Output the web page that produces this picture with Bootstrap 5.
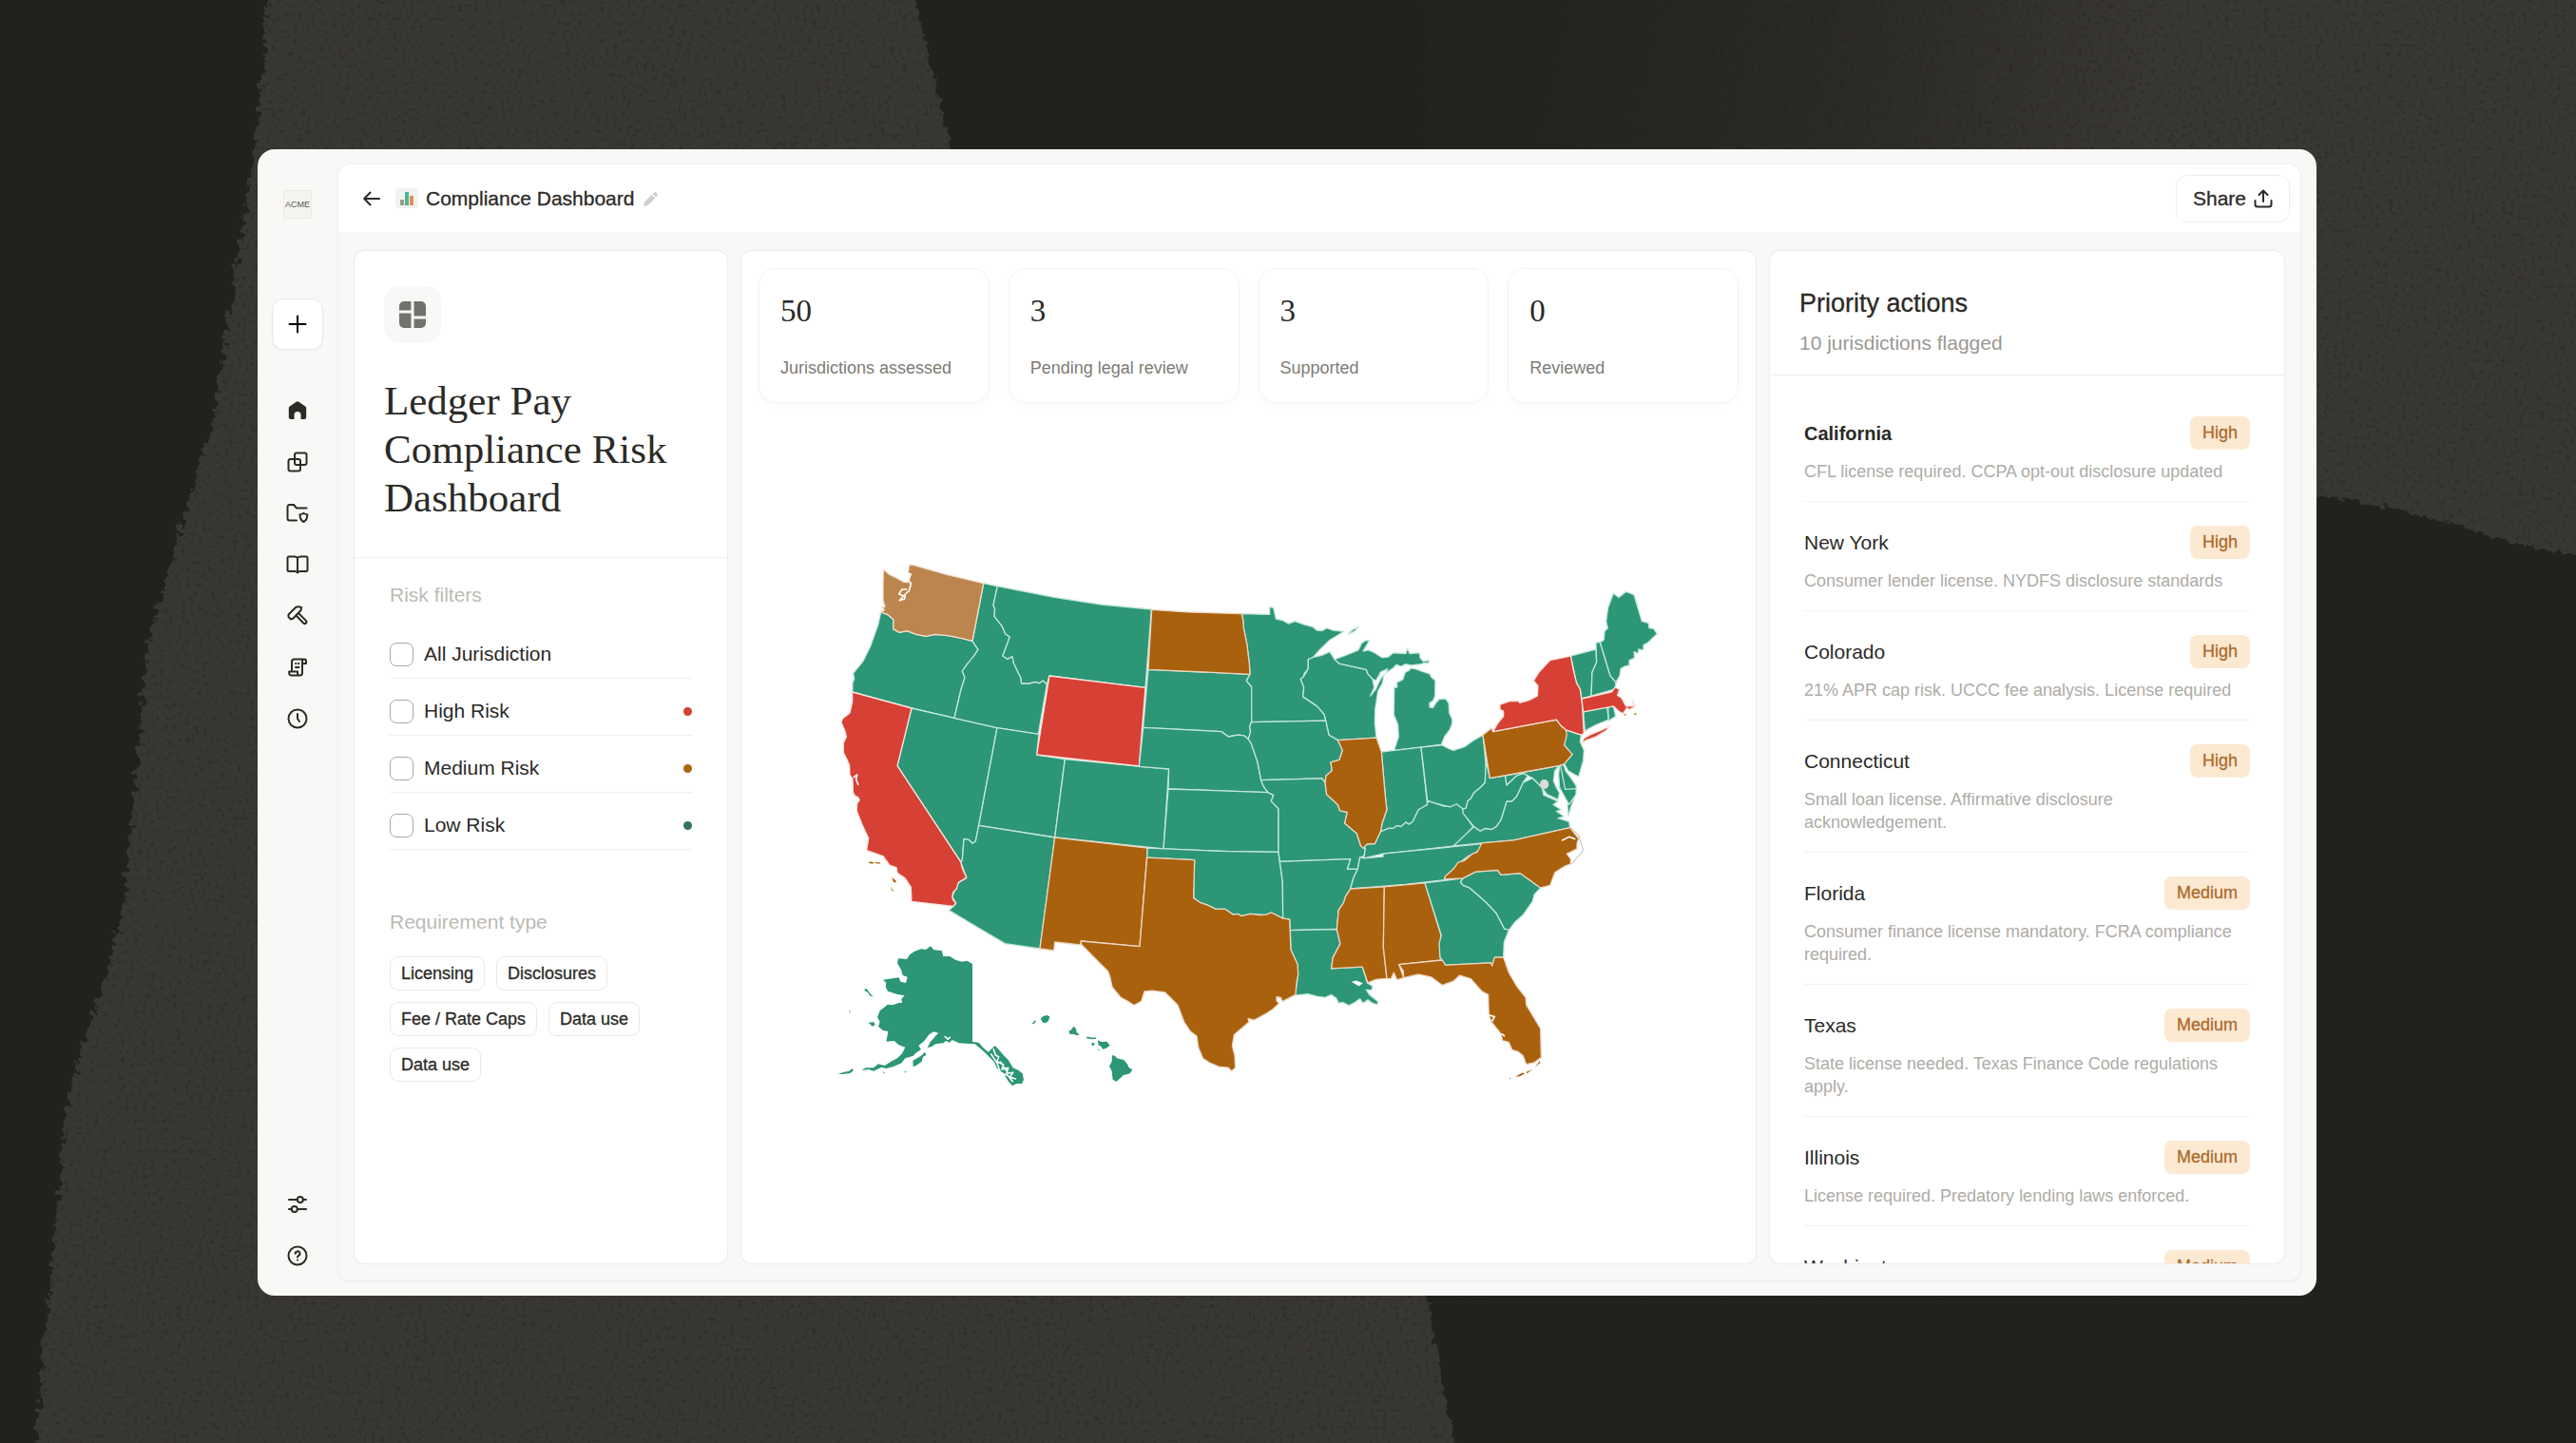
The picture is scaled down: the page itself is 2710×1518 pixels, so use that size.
<!DOCTYPE html>
<html lang="en">
<head>
<meta charset="utf-8">
<meta name="viewport" content="width=device-width, initial-scale=1">
<title>Compliance Dashboard</title>
<link href="https://cdn.jsdelivr.net/npm/bootstrap@5.3.0/dist/css/bootstrap.min.css" rel="stylesheet">
<style>
:root{--ink:#2b2a27;--line:#efeeec;--soft:#f9f8f6;--green:#2c9676;--red:#d64035;--brown:#a9610d}
body{font-family:"Liberation Sans",Arial,sans-serif;font-size:21px;line-height:24px;color:var(--ink);background:#393731;height:100vh;min-height:1100px;padding:157px 273px 155px 271px;overflow:hidden}
.backdrop-art{position:absolute;inset:0;width:100%;height:100%;z-index:-1}
.app-window{background:var(--soft);border-radius:18px;padding:15px 16px 15px 0;height:100%}
.side-rail{width:84px;padding-top:28px}
.acme-logo{width:30px;height:30px;border:1px solid #eceae6;background:#f5f4f1;font-size:9px;line-height:28px;color:#55534e;margin-bottom:84px}
.new-btn{width:54px;height:54px;border:1px solid #e9e8e5;border-radius:12px;background:#fff;margin-bottom:37px;box-shadow:0 1px 2px rgba(0,0,0,.04)}
.rail-link{width:54px;height:54px;color:var(--ink)}
.ico{fill:none;stroke:currentColor;stroke-width:2;stroke-linecap:round;stroke-linejoin:round;display:block}
.workspace{border:1px solid var(--line);border-radius:14px;box-shadow:0 1px 3px rgba(0,0,0,.05);overflow:hidden;min-width:0}
.top-bar{height:71px;background:#fff;padding:0 11px 0 26px}
.doc-title{font-size:21px;line-height:24px;margin:0;font-weight:400;-webkit-text-stroke:.3px}
.app-glyph{width:24px;height:21px;background:#f4f2ef;border-radius:4px}
.plain-btn{background:none;border:0;padding:0;color:var(--ink)}
.share-btn{height:50px;border:1px solid var(--line);border-radius:12px;background:#fff;padding:0 17px;color:var(--ink);-webkit-text-stroke:.3px}
.panes{padding:19px 16px 17px 16px;gap:13px;min-height:0}
.pane{background:#fff;border:1px solid #eeedeb;border-radius:12px;overflow:hidden;box-shadow:0 0 2px rgba(0,0,0,.04)}
.pane-left{width:394px;flex-shrink:0}.pane-mid{flex:1 1 0;min-width:0;padding:18px}.pane-right{width:543px;flex-shrink:0}
.intro{padding:37px 31px}
.intro-icon{width:60px;height:60px;border-radius:16px;background:var(--soft);margin-bottom:35px}
.intro h1{font-family:"Liberation Serif",serif;font-size:43px;line-height:51px;font-weight:400;margin:0}
.filters{border-top:1px solid var(--line);padding:27px 37px}
.muted-head{color:#bcbab4;font-size:21px;line-height:24px;font-weight:400;margin:0}
.filter-row{height:60px;padding-top:9px;border-bottom:1px solid #f1f0ee;gap:11px}
.filter-row .form-check-input{width:25px;height:25px;margin:0;border:1px solid #a9a7a0;border-radius:7px}
.dot{width:9px;height:9px;border-radius:50%}
.chip{height:36px;border:1px solid #eceae7;border-radius:9px;background:#fff;padding:0 11px;font-size:18px;line-height:22px;color:var(--ink);-webkit-text-stroke:.3px}
.chips{gap:12px;margin-top:24px}
.stats{gap:20px}
.stat{flex:1 1 0;margin:0;border:1px solid #f3f2f0;border-radius:18px;padding:26px 22px 25px;box-shadow:0 3px 8px rgba(0,0,0,.025)}
.stat dd{font-family:"Liberation Serif",serif;font-size:33px;line-height:36px;margin:0 0 31px}
.stat dt{font-size:18px;line-height:22px;font-weight:400;color:#7d7b75}
.us-map{width:100%;max-width:870px;height:auto}
.us-map path,.us-map circle{vector-effect:non-scaling-stroke}
.states path{fill:var(--green);stroke:#c3e6da;stroke-width:1.3;stroke-linejoin:round}
.states .hi{fill:var(--red);stroke:#fae3da}.states .md{fill:var(--brown);stroke:#ecd5c2}.states .wa{fill:#bd854e;stroke:#f3dfcd}
.states .sea{fill:none;stroke:#fff;stroke-width:1.6}.states .seg{fill:none}.states .isle{stroke:none}.states .isle-md{stroke:none;fill:var(--brown)}
.states .lake{fill:#fff;stroke:none}.states .banks{fill:none;stroke:#a9a49c;stroke-width:.8}
.prio-head{padding:39px 31px 19px;border-bottom:1px solid var(--line)}
.prio-head h2{font-size:27px;line-height:32px;font-weight:400;margin:0 0 12px;-webkit-text-stroke:.3px}
.prio-head p{line-height:28px;color:#9b9993;margin:0}
.prio-list{padding:18px 36px 0;margin:0}
.prio-list li{padding:25px 0 19px;border-bottom:1px solid #f3f2f0}
.prio-list h3{font-size:21px;line-height:24px;font-weight:400;margin:0}
.prio-list .current h3{font-size:20px;font-weight:700}
.prio-list p{font-size:18px;line-height:24px;color:#aeaca6;margin:11px 0 0}
.tag{background:#fce9d2;color:#ad6a2c;border-radius:8px;height:35px;padding:0 13px;font-size:18px;line-height:34px;-webkit-text-stroke:.3px}
</style>
<script src="https://cdn.jsdelivr.net/npm/bootstrap@5.3.0/dist/js/bootstrap.bundle.min.js"></script>
</head>
<body>
<svg class="backdrop-art" viewBox="0 0 2710 1518" preserveAspectRatio="none" aria-hidden="true">
  <defs>
    <filter id="rough" x="-5%" y="-5%" width="110%" height="110%"><feTurbulence type="fractalNoise" baseFrequency=".12" numOctaves="3" seed="4"/><feDisplacementMap in="SourceGraphic" scale="16"/></filter>
    <filter id="grain" x="0" y="0" width="100%" height="100%" color-interpolation-filters="sRGB"><feTurbulence type="fractalNoise" baseFrequency=".22" numOctaves="3" seed="9"/><feColorMatrix values="0 0 0 0 .14  0 0 0 0 .13  0 0 0 0 .11  0 0 0 7 -4.100"/></filter>
    <linearGradient id="fade" gradientUnits="userSpaceOnUse" x1="1640" y1="0" x2="2260" y2="120"><stop offset="0" stop-color="#24231f"/><stop offset=".5" stop-color="#24231f" stop-opacity=".65"/><stop offset="1" stop-color="#24231f" stop-opacity="0"/></linearGradient>
  </defs>
  <rect width="2710" height="1518" fill="#393732"/>
  <path d="M1200 0H2400V200H1200Z" fill="url(#fade)"/>
  <g filter="url(#rough)" fill="#24231f">
    <path d="M-30-30H285L268 160 225 435 155 680 130 960 70 1160 35 1545H-30Z"/>
    <path d="M955-30H1500V200H1010L985 90Z"/>
    <path d="M2400 515L2470 525 2560 545 2640 570 2740 590V1550H1535L1500 1362 1480 1300H2400Z"/>
  </g>
  <rect width="2710" height="1518" filter="url(#grain)" opacity=".35"/>
</svg>

<div class="app-window d-flex">
  <nav class="side-rail d-flex flex-column align-items-center flex-shrink-0" aria-label="Main">
    <div class="acme-logo text-center">ACME</div>
    <button class="new-btn d-flex align-items-center justify-content-center p-0" type="button" aria-label="New"><svg class="ico" width="20" height="20" viewBox="0 0 20 20"><path d="M10 1.500v17M1.500 10h17"/></svg></button>
    <a class="rail-link d-flex align-items-center justify-content-center" href="#" aria-label="Home"><svg width="20" height="20" viewBox="0 0 20 20"><path fill="currentColor" d="M8.600.8a2.500 2.500 0 0 1 2.800 0l6.800 4.600A2 2 0 0 1 19.200 7v10a2 2 0 0 1-2 2h-3.700v-4.500a3.500 3.500 0 0 0-7 0V19H2.800a2 2 0 0 1-2-2V7a2 2 0 0 1 1-1.600z"/></svg></a>
    <a class="rail-link d-flex align-items-center justify-content-center" href="#" aria-label="Workspaces"><svg class="ico" width="22" height="22" viewBox="0 0 22 22"><rect x="8" y="1.500" width="12.500" height="12.500" rx="2"/><rect x="1.500" y="8" width="12.500" height="12.500" rx="2"/></svg></a>
    <a class="rail-link d-flex align-items-center justify-content-center" href="#" aria-label="Vault"><svg class="ico" width="24" height="22" viewBox="0 0 24 22"><path d="M11 18.500H3.500a2 2 0 0 1-2-2V4a2 2 0 0 1 2-2H8l3 3.500h10.500"/><path d="M14.500 12.300c1.600 0 2.600-.7 3.900-1.500 1.300.8 2.300 1.500 3.900 1.500 0 4.200-1 6.400-3.900 7.700-2.900-1.300-3.900-3.500-3.900-7.700z"/></svg></a>
    <a class="rail-link d-flex align-items-center justify-content-center" href="#" aria-label="Library"><svg class="ico" width="24" height="20" viewBox="0 0 24 20"><path d="M12 3c-1-1-2-1.500-3.500-1.500H3A1.500 1.500 0 0 0 1.500 3v12.500A1.500 1.500 0 0 0 3 17h6c1.500 0 2.300.5 3 1.500.7-1 1.500-1.500 3-1.500h6a1.500 1.500 0 0 0 1.500-1.500V3A1.500 1.500 0 0 0 21 1.500h-5.500C14 1.500 13 2 12 3zM12 3v15"/></svg></a>
    <a class="rail-link d-flex align-items-center justify-content-center" href="#" aria-label="Tools"><svg class="ico" width="22" height="22" viewBox="0 0 22 22"><path d="M1.500 9.500L9 2c2-1 4-.8 6 0l-.3 2.800L6.500 13.500 4 14.500 1.500 12zM9.500 10.500l8 8.200c1.800 1.200 3.800-.8 2.600-2.600L12 8"/></svg></a>
    <a class="rail-link d-flex align-items-center justify-content-center" href="#" aria-label="Documents"><svg class="ico" width="20" height="20" viewBox="0 0 20 20"><path d="M4 13V4a2.500 2.500 0 0 1 2.500-2.500H17M15 5v11a2.500 2.500 0 0 1-2.500 2.500M17 1.500a2 2 0 0 1 2 2V6h-4V3.500a2 2 0 0 1 2-2M12.500 18.500h-9A2.300 2.300 0 0 1 1.200 16v-1.500H10V16a2.500 2.500 0 0 0 2.500 2.500M8 6h.5M11 6h.5M8 10h3.500"/></svg></a>
    <a class="rail-link d-flex align-items-center justify-content-center" href="#" aria-label="History"><svg class="ico" width="22" height="22" viewBox="0 0 22 22"><circle cx="11" cy="11" r="9.500"/><path d="M11 6v5l2 3"/></svg></a>
    <a class="rail-link d-flex align-items-center justify-content-center mt-auto" href="#" aria-label="Settings"><svg class="ico" width="20" height="20" viewBox="0 0 20 20"><path d="M1 5h8.500M16 5h3M1 15h2.500M10.500 15H19"/><circle cx="12.800" cy="5" r="3"/><circle cx="6.800" cy="15" r="3"/></svg></a>
    <a class="rail-link d-flex align-items-center justify-content-center" href="#" aria-label="Help"><svg class="ico" width="22" height="22" viewBox="0 0 22 22"><circle cx="11" cy="11" r="9.500"/><path d="M8.700 8.800a2.400 2.400 0 1 1 3.500 2.100c-.9.500-1.200.8-1.200 1.600M11 15.400v.1"/></svg></a>
  </nav>

  <main class="workspace flex-grow-1 d-flex flex-column">
    <header class="top-bar d-flex align-items-center flex-shrink-0">
      <button class="plain-btn" type="button" aria-label="Back"><svg class="ico" width="18" height="18" viewBox="0 0 18 18"><path d="M17 9H1.500M7.500 2.500L1.200 9l6.300 6.500"/></svg></button>
      <span class="app-glyph ms-3 d-flex align-items-center justify-content-center"><svg width="16" height="16" viewBox="0 0 16 16"><rect x="1" y="9" width="4" height="6" fill="#9a9892"/><rect x="6" y="1" width="4" height="14" fill="#4db296"/><rect x="11" y="5" width="4" height="10" fill="#d99257"/></svg></span>
      <h2 class="doc-title ms-2">Compliance Dashboard</h2>
      <button class="plain-btn ms-2" type="button" aria-label="Rename"><svg width="18" height="18" viewBox="0 0 18 18"><path fill="#cfcdc8" d="M2 16l1-4.500 7.500-7.500 3.500 3.500L6.500 15zM11.500 3l1.700-1.500a1.500 1.500 0 0 1 2 0l1.300 1.300a1.500 1.500 0 0 1 0 2L15 6.500z"/></svg></button>
      <button class="share-btn ms-auto d-flex align-items-center gap-2" type="button">Share<svg class="ico" width="20" height="20" viewBox="0 0 20 20"><path d="M10 13V2M5.500 6L10 1.500 14.500 6M1.500 12v4a2.500 2.500 0 0 0 2.500 2.500h12a2.500 2.500 0 0 0 2.500-2.500v-4"/></svg></button>
    </header>

    <div class="panes d-flex flex-grow-1">
      <section class="pane pane-left">
        <div class="intro">
          <div class="intro-icon d-flex align-items-center justify-content-center"><svg width="28" height="28" viewBox="0 0 28 28" fill="#73716d"><path d="M5 0h7.500v9.500H0V5a5 5 0 0 1 5-5zM15.500 0H23a5 5 0 0 1 5 5v10.500H15.500zM0 12.500h12.500V28H5a5 5 0 0 1-5-5zM15.500 18.500H28V23a5 5 0 0 1-5 5h-7.500z"/></svg></div>
          <h1>Ledger Pay Compliance Risk Dashboard</h1>
        </div>
        <div class="filters">
          <h2 class="muted-head mb-3">Risk filters</h2>
          <div class="filter-row d-flex align-items-center"><input class="form-check-input" type="checkbox" id="f-all"><label for="f-all">All Jurisdiction</label></div>
          <div class="filter-row d-flex align-items-center"><input class="form-check-input" type="checkbox" id="f-high"><label for="f-high">High Risk</label><span class="dot ms-auto" style="background:#d64035"></span></div>
          <div class="filter-row d-flex align-items-center"><input class="form-check-input" type="checkbox" id="f-med"><label for="f-med">Medium Risk</label><span class="dot ms-auto" style="background:#ad640f"></span></div>
          <div class="filter-row d-flex align-items-center"><input class="form-check-input" type="checkbox" id="f-low"><label for="f-low">Low Risk</label><span class="dot ms-auto" style="background:#357560"></span></div>
          <h2 class="muted-head pt-5 mt-3">Requirement type</h2>
          <div class="chips d-flex flex-wrap">
            <button class="chip" type="button">Licensing</button><button class="chip" type="button">Disclosures</button><button class="chip" type="button">Fee / Rate Caps</button><button class="chip" type="button">Data use</button><button class="chip" type="button">Data use</button>
          </div>
        </div>
      </section>

      <section class="pane pane-mid d-flex flex-column">
        <div class="stats d-flex">
          <dl class="stat d-flex flex-column-reverse"><dt>Jurisdictions assessed</dt><dd>50</dd></dl>
          <dl class="stat d-flex flex-column-reverse"><dt>Pending legal review</dt><dd>3</dd></dl>
          <dl class="stat d-flex flex-column-reverse"><dt>Supported</dt><dd>3</dd></dl>
          <dl class="stat d-flex flex-column-reverse"><dt>Reviewed</dt><dd>0</dd></dl>
        </div>
        <div class="flex-grow-1 d-flex align-items-center justify-content-center">
          <svg class="us-map" viewBox="880 590 870 556" role="img" aria-label="Risk level by state">
            <g class="states">
              <!-- West -->
              <g transform="translate(870 570) scale(.33333)">
                <path d="M173 222L195 230 213 245 212 275 232 286 255 281 285 292 315 298 345 292 385 296 430 305 462 313 480 340 468 358 460 370 446 385 430 408 438 428 425 470 405 556 270 525 83 474 84 445 89 432 86 415 118 375 140 330 158 280 165 260Z"/>
                <path d="M270 525L540 587 482 895 472 945 462 952 450 940 435 938 430 1005 425 1010 225 707Z"/>
                <path d="M497 131L541 140 528 200 533 212 531 235 555 265 566 290 580 300 558 360 572 370 588 362 593 385 615 430 617 447 640 447 660 442 673 446 685 438 697 450 670 607 540 587 405 556 425 470 438 428 430 408 446 385 468 358 480 340 462 313Z"/>
                <path d="M541 140L720 175 870 198 1027 213 1008 460 705 423 697 450 685 438 673 446 660 442 640 447 617 447 615 430 593 385 588 362 572 370 558 360 580 300 566 290 555 265 531 235 533 212 528 200Z"/>
                <path d="M540 587L672 607 665 672 754 686 722 933 482 895Z"/>
                <path d="M754 686L1082 717 1065 969 722 933Z"/>
                <path d="M482 895L722 933 675 1284 565 1268 388 1163 402 1150 410 1140 398 1120 418 1075 443 1060 425 1010 430 1005 435 938 450 940 462 952 472 945Z"/>
                <path class="wa" d="M181 87L200 103 225 115 247 127 258 128 265 110 258 90 264 72 275 73 380 103 497 131 462 313 430 305 385 296 345 292 315 298 285 292 255 281 232 286 212 275 213 245 195 230 173 222 184 215 176 207 186 205 180 185 180 130Z"/>
                <path class="sea" d="M262 85L250 98 268 102 260 120 268 132 262 155 250 165 248 180 232 185 245 170 230 165 240 150 256 150"/>
                <path class="hi" d="M83 474L270 525 225 707 425 1010 430 1030 443 1060 418 1075 412 1095 402 1105 398 1120 402 1132 410 1140 402 1150 270 1135 268 1090 250 1062 225 1045 222 1028 200 1020 180 992 128 974 134 935 115 895 97 850 98 825 106 815 100 805 92 803 85 790 84 750 75 735 74 705 65 685 55 665 55 635 64 615 60 598 48 570 52 558 75 540 83 505Z"/>
                <path class="sea" d="M86 744L98 735 95 750 102 768"/>
                <path class="hi" d="M705 423L1008 460 988 708 665 672Z"/>
                <path class="md" d="M722 933L1015 966 990 1277 805 1260 803 1272 722 1263 719 1290 675 1284Z"/>
                <path class="isle-md" d="M136 1009l14 2-2 5-12-2zM155 1010l18 3-4 3-14-2zM208 1059l14 12-4 5-7-6zM203 1088l10 13-3 2z"/>
              </g>
              <!-- Alaska and Hawaii -->
              <g transform="translate(870 960) scale(.33333)">
                <path class="isle" d="M462 162V408L482 410 495 425 512 440 533 420 545 432 560 450 575 465 590 490 608 498 620 508 624 528 618 540 600 540 588 547 575 532 560 508 540 492 530 470 515 455 500 440 470 415 440 413 420 412 398 402 390 410 378 405 370 412 345 415 335 422 320 427 328 410 345 390 355 380 340 376 325 385 310 405 292 420 300 432 285 442 275 452 250 460 238 475 215 485 190 492 175 488 150 500 135 495 112 498 125 490 150 490 165 478 185 483 205 470 225 460 240 445 250 425 230 418 215 405 190 407 196 375 180 372 165 360 170 345 162 330 170 310 195 290 210 292 230 285 240 285 238 272 248 262 225 258 195 248 188 235 190 222 180 212 230 205 235 218 252 222 257 203 242 198 237 180 225 160 228 145 255 147 265 132 280 122 300 115 315 117 330 106 340 118 365 120 370 138 390 138 410 150 430 155 445 152Z"/>
                <path class="isle" d="M274 467L300 452 312 440 316 450 306 455 302 470 285 482 275 487ZM122 240l8 2 6 10 14 15-12-5-6-10-10-5zM133 347l18-1 4 8-8 5zM72 306l6 8h-4zM38 509l20-6 15-3 10-8 3 7-10 8-25 3zM98 501l10 3zM180 500l8 8-6-2zM248 500l6 2-4 4zM172 227h5z"/>
                <path class="sea" d="M528 430L535 450 545 455 540 470 560 480 555 495 575 490 570 508 590 505 580 520 600 525M520 445L540 475 550 505 575 515 590 535M550 470L570 500"/>
                <path class="sea" d="M374 390L385 400 392 392"/>
                <path class="isle" d="M650 350l10-10 3 3-8 9zM677 335l8-8 12-3 9 4-4 14-8 6-10-1zM766 374l6-3 10-12 6 6 3 12 9 9-10 1-10-4-10 1zM822 393l8-1 10 3 14-1-3 5-12 1-17-3zM838 411l10 1-3 8-6-1zM858 403l10 5 18-1 10 12-12 9-10 3-6-8-9-6zM856 432l10 1-6 2zM903 450l10 3 5 7 22 5 12 15 3 8 12 8-8 12-20 5-22 20-12-5-3-28-8-15 8-15z"/>
              </g>
              <!-- Plains and Midwest -->
              <g transform="translate(1200 600) scale(.33333 .35714)">
                <path d="M27 292L348 306 337 325 353 343 353 445 347 460 350 475 343 497 330 487 310 485 280 490 258 475 11 463Z"/>
                <path d="M11 463L258 475 280 490 310 485 330 487 343 497 352 510 372 565 383 618 390 635 405 654 90 644 92 585-2 578Z"/>
                <path d="M90 644L405 654 422 662 415 680 438 702V830L280 828 75 820Z"/>
                <path d="M25 818L280 828 438 830 442 858 451 918 452 1025 415 1008 400 1014 380 1015 350 1012 320 1018 310 1012 295 1014 270 998 240 998 212 985 190 978 170 965 173 853 23 846Z"/>
                <path d="M322 128L410 130V108L422 110 430 143 450 147 470 157 490 150 505 155 520 160 545 166 560 177 575 178 590 170 610 177 645 180 600 205 570 232 545 258 532 262 532 290 520 303 516 315 508 320 518 345 515 372 535 385 560 400 583 425 587 443 353 447 353 343 337 325 348 306 346 275 338 215 328 170 326 145Z"/>
                <path d="M532 262L548 256 575 250 600 240 615 262 630 275 715 292 720 305 735 320 740 345 728 370 745 350 760 320 772 305 765 335 752 355 743 410 742 450 747 493 625 500 597 485 587 443 583 425 560 400 515 372 518 345 508 320 516 315 532 290Z"/>
                <path d="M615 262L650 250 690 235 700 215 712 207 725 207 705 238 722 235 740 242 765 257 785 255 800 243 840 245 845 230 852 245 883 243 885 258 895 268 913 265 912 273 895 273 890 276 855 280 840 276 825 283 810 278 800 288 778 302 782 290 760 300 755 310 745 325 735 320 720 305 715 292 630 275ZM658 187L672 175 690 166 680 178 665 186Z"/>
                <path d="M870 290L890 297 915 305 921 315 933 325 932 370 925 385 915 390 915 403 925 405 935 390 945 380 965 378 975 390 977 420 987 440 985 455 978 470 962 490 952 513 888 521 803 530 817 490 815 455 802 425 803 370 803 345 812 345 812 330 830 322 838 300 850 295 855 288Z"/>
                <path d="M353 447L587 443 597 485 625 500 640 530 630 558 603 565 607 590 588 605 585 625 575 613 383 618 372 565 352 510 343 497 350 475 347 460Z"/>
                <path d="M383 618L575 613 585 625 590 660 625 690 632 708 655 712 647 745 685 775 698 812 712 818 708 842 695 845 688 880 655 880 665 850 442 858 438 830V702L415 680 422 662 405 654 390 635Z"/>
                <path d="M442 858L665 850 655 880 688 880 675 905 665 938 650 960 643 980 628 1000 622 1057 475 1060 473 1028 452 1025 451 918Z"/>
                <path d="M475 1060L622 1057 633 1100 610 1140 605 1173 703 1168 718 1215 735 1225 732 1237 715 1235 725 1250 752 1270 750 1279 735 1275 720 1265 705 1275 695 1262 680 1272 660 1282 640 1272 628 1275 620 1260 605 1250 585 1258 560 1255 530 1248 490 1252 500 1190 498 1160 477 1118Z"/>
                <path class="lake" d="M668 1212l16-4 20 8-12 9z"/>
                <path d="M763 535L803 530 888 521 908 690 895 700 880 705 862 740 850 748 840 742 825 755 812 752 800 760 785 760 760 770 765 745 780 705 775 665Z"/>
                <path d="M760 770L785 760 800 760 812 752 825 755 840 742 850 748 862 740 880 705 908 690V678L930 685 960 695 975 692 1000 685 1020 700 1022 715 1052 755 1010 800 990 812 840 828 768 835 708 848 712 818 705 818 718 806 742 805Z"/>
                <path d="M708 848L768 843V835L840 828 990 814 1080 805 1075 820 1060 832 1040 840 1025 850 1000 870 980 890 962 905V912L840 925 665 938 675 905 688 880 695 845Z"/>
                <path class="md" d="M38 116L150 123 322 128 326 145 328 170 338 215 346 275 348 306 27 292Z"/>
                <path class="md" d="M625 500L747 493 763 535 775 665 780 705 765 745 760 770 742 805 718 806 705 818 698 812 685 775 647 745 655 712 632 708 625 690 590 660 585 625 588 605 607 590 603 565 630 558 640 530Z"/>
                <path class="md" d="M23 846L173 853 170 965 190 978 212 985 240 998 270 998 295 1014 310 1012 320 1018 350 1012 380 1015 400 1014 415 1008 452 1025 473 1028 477 1118 498 1160 500 1190 495 1215 492 1250 450 1270 445 1258 432 1256 432 1268 440 1275 420 1293 400 1305 360 1325 342 1320 345 1330 320 1350 298 1368 292 1400 300 1430 302 1465 290 1475 280 1465 250 1462 220 1450 200 1438 185 1405 180 1372 160 1358 140 1330 120 1280 80 1243 40 1238 15 1240 5 1269-18 1281-40 1268-60 1258-87 1227-93 1200-100 1181-145 1139-185 1101V1092L0 1108Z"/>
                <path class="md" d="M665 938L772 932 769 1110 780 1202 745 1205 720 1215 703 1168 605 1173 610 1140 633 1100 622 1057 628 1000 643 980 650 960Z"/>
                <path class="md" d="M772 932L900 921 950 1072 948 1140 955 1148 818 1161 833 1200 812 1206 802 1185 793 1203 780 1202 769 1110Z"/>
              </g>
              <!-- East -->
              <g transform="translate(1480 600) scale(.33333 .35714)">
                <path d="M48 521L115 515 135 525 150 530 185 520 215 500 243 485 253 575 250 625 235 640 215 655 205 672 195 680 190 700 180 703 160 688 140 697 120 693 90 685 68 678Z"/>
                <path d="M150 812L215 755 235 768 250 760 270 763 285 755 300 735 318 680 335 680 350 665 370 625 400 612 430 640 435 662 480 680 465 690 490 705 475 710 500 725 480 730 515 740 518 758 340 795 240 803ZM510 690L532 670 520 700 512 725Z"/>
                <path d="M313 605L485 575 470 590 466 620 475 640 485 655 480 675 445 660 430 640 400 612 385 605 370 598 350 605 318 633Z"/>
                <path d="M485 575L497 572 505 592 520 610 538 635 537 660 515 690 500 665 485 640 482 600Z"/>
                <path class="seg" d="M488 575L503 645 537 643"/>
                <path d="M253 560L265 612 313 605 318 633 350 605 370 598 385 605 370 625 350 665 335 680 318 680 300 735 285 755 270 763 250 760 235 768 215 755 180 715V703L190 700 195 680 205 672 215 655 235 640 250 625Z"/>
                <path d="M505 470L553 485 550 505 562 530 560 560 545 608 530 600 512 590 500 570 525 542 500 515Z"/>
                <path d="M520 252L600 233 602 270 588 300 585 370 555 378 550 350 538 330Z"/>
                <path d="M600 213L613 212 645 310 663 330 660 350 585 370 588 300 602 270Z"/>
                <path d="M613 212L625 205 627 180 637 170 632 150 638 110 655 68 672 80 695 63 720 72 745 150 765 155 768 170 782 172 793 187 778 200 765 212 750 220 750 235 735 232 733 245 720 240 722 258 705 265 705 280 690 283 678 290 675 310 663 330 645 310Z"/>
                <path d="M560 417L635 403 640 440 600 455 565 473Z"/><path d="M638 403L655 400 662 430 640 443Z"/>
                <path d="M180 907L220 888 290 883 300 897 360 892 425 935 405 955 400 975 370 1015 345 1035 325 1060 310 1055 285 1010 255 980 225 955 200 935 180 928 172 918Z"/>
                <path d="M60 921L180 907 172 918 180 928 200 935 225 955 255 980 285 1010 310 1055 325 1060 310 1095 308 1140H280L272 1165 268 1156 125 1163 108 1140 105 1100 112 1075Z"/>
                <path class="md" d="M243 485L270 465 275 475 475 440 490 458 505 470 508 485 500 515 525 542 500 570 485 575 265 612Z"/>
                <path class="md" d="M240 803L340 795 518 758 545 790 540 805 540 820 520 830 508 835 520 850 520 865 500 872 470 890 455 928 425 935 360 892 300 897 290 883 220 888 180 907 122 910 125 900 150 880 165 860 185 855 210 835 225 830Z"/>
                <path class="sea" d="M492 796L515 785 535 792"/>
                <path class="banks" d="M520 758L545 780 560 825 523 865"/>
                <path class="md" d="M-22 1161L115 1148 125 1163 268 1156 272 1165 280 1140H308L325 1185 350 1225 378 1258 380 1280 425 1350 427 1435 405 1450 380 1455 370 1430 355 1418 335 1412 325 1390 305 1385 300 1365 270 1330 262 1310 260 1250 240 1240 205 1203 170 1193 150 1210 115 1222 80 1198 40 1190-7 1200-8 1180Z"/>
                <path class="sea" d="M262 1310L280 1315 272 1328M302 1365L312 1372"/>
                <path class="isle-md" d="M345 1492L368 1480 376 1482 360 1490ZM380 1478L400 1470 382 1482ZM408 1464L422 1445 424 1450ZM325 1495l6 0-2 3z"/>
                <path class="hi" d="M275 475L290 450 308 430 308 415 297 410 297 395 330 385 355 385 360 390 390 382 415 370 417 340 403 325 420 300 455 265 520 252 528 290 538 330 550 350 557 400 562 480 553 485 505 470 490 458 475 440Z"/>
                <path class="hi" d="M555 510L562 495 580 485 618 470 645 458 632 472 600 490 570 500Z"/>
                <path class="hi" d="M555 378L650 358 660 345 674 350 668 368 680 375 695 400 720 400 715 382 724 402 705 410 698 405 685 422 672 415 655 400 640 403 560 417Z"/>
                <path class="isle-md" d="M686 425l10-2-4 5zM718 423l10-2-2 5z"/>
                <circle cx="437" cy="630" r="14" fill="#dcdbd8"/>
              </g>
            </g>
          </svg>
        </div>
      </section>

      <section class="pane pane-right">
        <div class="prio-head"><h2>Priority actions</h2><p>10 jurisdictions flagged</p></div>
        <ul class="prio-list list-unstyled">
          <li class="current"><div class="d-flex align-items-center justify-content-between"><h3>California</h3><span class="tag">High</span></div><p class="pe-2">CFL license required. CCPA opt-out disclosure updated</p></li>
          <li><div class="d-flex align-items-center justify-content-between"><h3>New York</h3><span class="tag">High</span></div><p class="pe-2">Consumer lender license. NYDFS disclosure standards</p></li>
          <li><div class="d-flex align-items-center justify-content-between"><h3>Colorado</h3><span class="tag">High</span></div><p class="pe-2">21% APR cap risk. UCCC fee analysis. License required</p></li>
          <li><div class="d-flex align-items-center justify-content-between"><h3>Connecticut</h3><span class="tag">High</span></div><p class="pe-2">Small loan license. Affirmative disclosure acknowledgement.</p></li>
          <li><div class="d-flex align-items-center justify-content-between"><h3>Florida</h3><span class="tag">Medium</span></div><p class="pe-2">Consumer finance license mandatory. FCRA compliance required.</p></li>
          <li><div class="d-flex align-items-center justify-content-between"><h3>Texas</h3><span class="tag">Medium</span></div><p class="pe-2">State license needed. Texas Finance Code regulations apply.</p></li>
          <li><div class="d-flex align-items-center justify-content-between"><h3>Illinois</h3><span class="tag">Medium</span></div><p class="pe-2">License required. Predatory lending laws enforced.</p></li>
          <li><div class="d-flex align-items-center justify-content-between"><h3>Washington</h3><span class="tag">Medium</span></div></li>
        </ul>
      </section>
    </div>
  </main>
</div>
</body>
</html>
